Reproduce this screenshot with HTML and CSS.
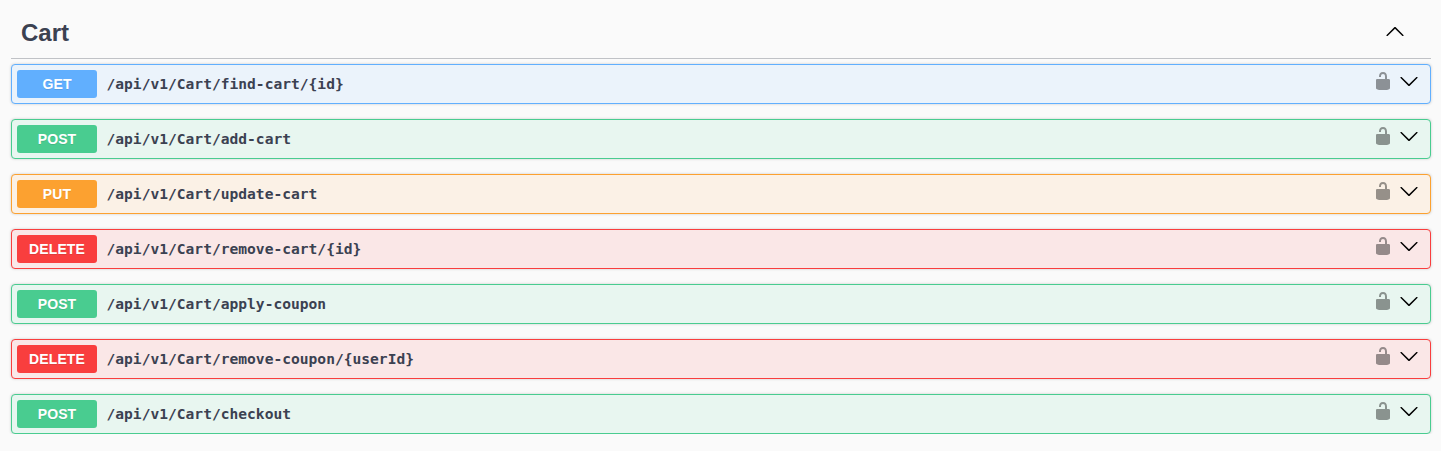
FILE: index.html
```html
<!DOCTYPE html>
<html lang="en">
<head>
<meta charset="utf-8">
<title>Cart</title>
<link rel="stylesheet" href="styles.css">
</head>
<body>
<svg class="defs" width="0" height="0">
  <symbol id="unlocked" viewBox="0 0 20 20"><path d="M15.8 8H14V5.6C14 2.703 12.665 1 10 1 7.334 1 6 2.703 6 5.6V6h2v-.801C8 3.754 8.797 3 10 3c1.203 0 2 .754 2 2.199V8H4c-.553 0-1 .646-1 1.199V17c0 .549.428 1.139.951 1.307l1.197.387C5.672 18.861 6.55 19 7.1 19h5.8c.549 0 1.428-.139 1.951-.307l1.196-.387c.524-.167.953-.757.953-1.306V9.199C17 8.646 16.352 8 15.8 8z"/></symbol>
  <symbol id="arrow-down" viewBox="0 0 20 20"><path d="M17.418 6.109c.272-.268.709-.268.979 0s.271.701 0 .969l-7.908 7.83c-.27.268-.707.268-.979 0l-7.908-7.83c-.27-.268-.27-.701 0-.969.271-.268.709-.268.979 0L10 13.25z"/></symbol>
  <symbol id="arrow-up" viewBox="0 0 20 20"><path d="M17.418 14.908c.272.268.709.268.979 0s.271-.701 0-.969l-7.908-7.83c-.27-.268-.707-.268-.979 0l-7.908 7.83c-.27.268-.27.701 0 .969.271.268.709.268.979 0L10 7.767z"/></symbol>
</svg>
<main class="section">
  <header class="tag"><h3>Cart</h3><svg class="arrow"><use href="#arrow-up"/></svg></header>
  <div class="ops">
    <div class="op get"><span class="method">GET</span><span class="path">/api/v1/Cart/find-cart/{id}</span><svg class="lock"><use href="#unlocked"/></svg><svg class="arrow"><use href="#arrow-down"/></svg></div>
    <div class="op post"><span class="method">POST</span><span class="path">/api/v1/Cart/add-cart</span><svg class="lock"><use href="#unlocked"/></svg><svg class="arrow"><use href="#arrow-down"/></svg></div>
    <div class="op put"><span class="method">PUT</span><span class="path">/api/v1/Cart/update-cart</span><svg class="lock"><use href="#unlocked"/></svg><svg class="arrow"><use href="#arrow-down"/></svg></div>
    <div class="op delete"><span class="method">DELETE</span><span class="path">/api/v1/Cart/remove-cart/{id}</span><svg class="lock"><use href="#unlocked"/></svg><svg class="arrow"><use href="#arrow-down"/></svg></div>
    <div class="op post"><span class="method">POST</span><span class="path">/api/v1/Cart/apply-coupon</span><svg class="lock"><use href="#unlocked"/></svg><svg class="arrow"><use href="#arrow-down"/></svg></div>
    <div class="op delete"><span class="method">DELETE</span><span class="path">/api/v1/Cart/remove-coupon/{userId}</span><svg class="lock"><use href="#unlocked"/></svg><svg class="arrow"><use href="#arrow-down"/></svg></div>
    <div class="op post"><span class="method">POST</span><span class="path">/api/v1/Cart/checkout</span><svg class="lock"><use href="#unlocked"/></svg><svg class="arrow"><use href="#arrow-down"/></svg></div>
  </div>
</main>
</body>
</html>
```
FILE: styles.css
```css
* { box-sizing: border-box; }
body { margin: 0; background: #fafafa; color: #3b4151; font-family: "Liberation Sans", Arial, sans-serif; overflow: hidden; }
.defs { display: none; }
.section { padding: 6px 10px 0 11px; }
.tag { display: flex; align-items: center; justify-content: space-between; height: 53px; padding: 0 26px 0 10px; border-bottom: 1px solid rgba(59, 65, 81, .3); }
.tag h3 { margin: 0; padding-top: 2px; font-size: 24px; line-height: 28px; }
.arrow { width: 20px; height: 20px; fill: #000; flex: none; }
.tag .arrow { margin-bottom: 2px; }
.ops { display: flex; flex-direction: column; gap: 15px; padding-top: 5px; }
.op { display: flex; align-items: center; height: 40px; padding: 5px 11px 5px 5px; border: 1px solid var(--c); border-radius: 4px; background: var(--bg); box-shadow: 0 0 3px rgba(0, 0, 0, .19); }
.method { width: 80px; height: 28px; border-radius: 3px; background: var(--c); color: #fff; font-size: 14px; font-weight: 700; line-height: 28px; letter-spacing: .1px; text-align: center; text-shadow: 0 1px 0 rgba(0, 0, 0, .1); }
.path { flex: 1; padding-left: 9.5px; font-family: "DejaVu Sans Mono", monospace; font-size: 14.6px; font-weight: 700; line-height: 20px; }
.lock { width: 20px; height: 20px; margin: 0 6px 6px 0; opacity: .4; }
.op .arrow { margin-bottom: 6px; }
.get { --c: #61affe; --bg: #ebf3fb; }
.post { --c: #49cc90; --bg: #e8f6f0; }
.put { --c: #fca130; --bg: #fbf1e6; }
.delete { --c: #f93e3e; --bg: #fae7e7; }
```
